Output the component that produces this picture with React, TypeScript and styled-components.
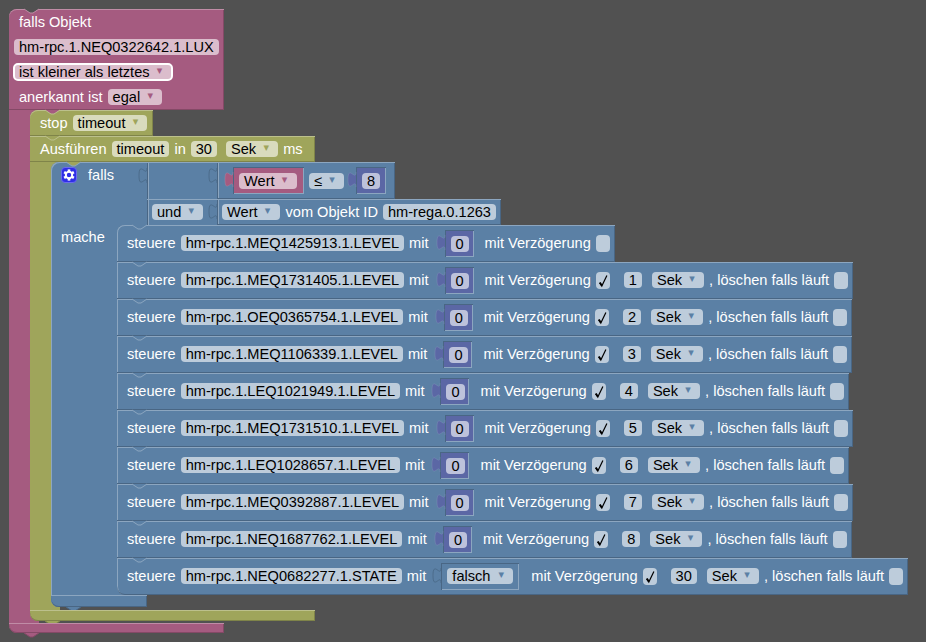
import styled, { createGlobalStyle } from "styled-components";

const hues = {
  pink: { base: "#a55b80", light: "#c08ca6", dark: "#844966", pill: "#dbbdcc" },
  green: { base: "#9fa55b", light: "#bcc08c", dark: "#7f8449", pill: "#d9dbbd" },
  blue: { base: "#5b80a5", light: "#8ca6c0", dark: "#496684", pill: "#bdccdb" },
  purple: { base: "#5b67a5", light: "#8c95c0", dark: "#495284", pill: "#bdc2db" },
};
type Hue = keyof typeof hues;

const GlobalStyle = createGlobalStyle`
  html, body {
    margin: 0;
    height: 100%;
    background-color: #515151;
    overflow: hidden;
  }
  body {
    font-family: "Liberation Sans", Arial, sans-serif;
    font-size: 14.6px;
  }
`;

const Page = styled.div`
  padding: 9px 0 0 9px;
  color: #fff;
  white-space: nowrap;
`;

const Shaded = styled.div<{ $hue: Hue }>`
  position: relative;
  background-color: ${(p) => hues[p.$hue].base};
  box-shadow:
    inset 0 1px ${(p) => hues[p.$hue].light},
    inset 0 -1px ${(p) => hues[p.$hue].dark},
    inset -1px 0 ${(p) => hues[p.$hue].dark};
`;

/* header of the outer trigger block */
const TriggerHead = styled(Shaded)`
  width: 215px;
  height: 101px;
  padding: 0 0 1px 5px;
  box-sizing: border-box;
  border-top-left-radius: 8px;
`;

const HeadRow = styled.div`
  display: flex;
  align-items: center;
  gap: 5px;
  height: 25px;
`;

const HeadLabel = styled.span`
  margin-left: 5px;
`;

const Mouth = styled.div<{ $hue: Hue; $arm: number; $gap: number }>`
  padding-left: ${(p) => p.$arm}px;
  padding-bottom: ${(p) => p.$gap}px;
  background: linear-gradient(
    90deg,
    ${(p) => hues[p.$hue].base} ${(p) => p.$arm + 9}px,
    transparent ${(p) => p.$arm + 9}px
  );
`;

const Foot = styled(Shaded)<{ $w: number; $h: number }>`
  width: ${(p) => p.$w}px;
  height: ${(p) => p.$h}px;
  border-bottom-left-radius: 8px;
`;

const StopBlock = styled(Shaded)`
  width: 123px;
  height: 26px;
  display: flex;
  align-items: center;
  gap: 5px;
  padding-left: 10px;
  box-sizing: border-box;
  border-top-left-radius: 8px;
`;

const TimerHead = styled(Shaded)`
  width: 285px;
  height: 26px;
  display: flex;
  align-items: center;
  gap: 5px;
  padding-left: 10px;
  box-sizing: border-box;
`;

/* the if block: its background is only the left column, the rest overflows */
const IfBlock = styled.div`
  position: relative;
  width: 96px;
  background-color: ${hues.blue.base};
  border-top-left-radius: 8px;
  border-bottom-left-radius: 8px;
  box-shadow: inset 1px 1px ${hues.blue.light};
`;

const IfTop = styled.div`
  display: flex;
  width: max-content;
`;

const IfLabel = styled.div`
  width: 96px;
  height: 63px;
  flex: none;
  display: flex;
  align-items: flex-start;
  gap: 11px;
  padding: 5px 0 0 10px;
  box-sizing: border-box;
`;

const FallsText = styled.span`
  line-height: 16px;
`;

const Conditions = styled.div`
  display: flex;
  flex-direction: column;
  align-items: flex-start;
`;

const CondRow = styled(Shaded)<{ $h: number }>`
  display: flex;
  align-items: center;
  height: ${(p) => p.$h}px;
  box-shadow:
    inset 0 1px ${hues.blue.light},
    inset 1px 0 ${hues.blue.dark},
    inset 2px 0 ${hues.blue.light};
`;

const EmptyCell = styled.div`
  width: 70px;
  flex: none;
`;

const UndCell = styled.div`
  width: 70px;
  flex: none;
  padding-left: 5px;
  box-sizing: border-box;
`;

const InnerCond = styled(Shaded)<{ $h: number; $w: number }>`
  display: flex;
  align-items: center;
  gap: 5px;
  height: ${(p) => p.$h}px;
  width: ${(p) => p.$w}px;
  padding: 0 5px;
  box-sizing: border-box;
  box-shadow:
    inset 0 1px ${hues.blue.light},
    inset 0 -1px ${hues.blue.dark},
    inset -1px 0 ${hues.blue.dark},
    inset 1px 0 ${hues.blue.dark},
    inset 2px 0 ${hues.blue.light};
`;

const MacheRow = styled.div`
  display: flex;
  width: max-content;
`;

const MacheLabel = styled.div`
  width: 66px;
  flex: none;
  padding: 4px 0 0 10px;
  box-sizing: border-box;
`;

const Rows = styled.div`
  display: flex;
  flex-direction: column;
  align-items: flex-start;
`;

const Row = styled(Shaded)<{ $first?: boolean; $last?: boolean }>`
  display: flex;
  align-items: center;
  gap: 5px;
  height: 37px;
  padding: 0 5px 1px 10px;
  box-sizing: border-box;
  border-top-left-radius: ${(p) => (p.$first ? "8px" : "0")};
  border-bottom-left-radius: ${(p) => (p.$last ? "8px" : "0")};
  box-shadow:
    inset 0 1px ${hues.blue.light},
    inset 0 -1px ${hues.blue.dark},
    inset -1px 0 ${hues.blue.dark},
    inset 1px 0 ${hues.blue.light};
`;

const Pill = styled.span<{ $hue: Hue; $selected?: boolean; $ml?: number; $mt?: number; $grow?: boolean }>`
  display: inline-flex;
  align-items: center;
  justify-content: space-between;
  flex: ${(p) => (p.$grow ? "1" : "none")};
  height: 16px;
  padding: 0 5px;
  margin-left: ${(p) => p.$ml ?? 0}px;
  margin-top: ${(p) => p.$mt ?? 0}px;
  border-radius: 4px;
  background-color: ${(p) => hues[p.$hue].pill};
  color: #000;
  line-height: 16px;
  outline: ${(p) => (p.$selected ? "2px solid #fff" : "none")};
  outline-offset: -1px;
`;

const Arrow = styled.span<{ $hue: Hue }>`
  display: inline-block;
  width: 14px;
  margin: -2px 0 0 3px;
  text-align: center;
  color: ${(p) => hues[p.$hue].base};
  font-family: "DejaVu Sans", sans-serif;
  font-size: 11px;
  line-height: 14px;
`;

const Gap = styled.span<{ $w: number }>`
  display: inline-block;
  width: ${(p) => p.$w}px;
  margin-left: -5px;
`;

const CheckBox = styled.span`
  display: inline-flex;
  width: 14px;
  height: 17px;
  border-radius: 4px;
  background-color: ${hues.blue.pill};
`;

const CheckMark = styled.svg`
  width: 14px;
  height: 17px;
`;

const ValueBlock = styled(Shaded)<{ $w: number; $ml?: number }>`
  display: flex;
  align-items: center;
  flex: none;
  width: ${(p) => p.$w}px;
  height: 27px;
  margin-left: ${(p) => p.$ml ?? 8}px;
  padding: 0 6px;
  box-sizing: border-box;
  box-shadow:
    inset 1px 1px ${hues.blue.dark},
    inset -1px -1px ${hues.blue.light},
    inset 0 0 0 1px ${(p) => (p.$hue === "blue" ? hues.blue.light : "transparent")};
`;

const TabShape = styled.svg<{ $top: number }>`
  position: absolute;
  left: -8px;
  top: ${(p) => p.$top}px;
  width: 9px;
  height: 16px;
  overflow: visible;
`;

const NotchShape = styled.svg<{ $bottom?: boolean }>`
  position: absolute;
  left: 15px;
  ${(p) => (p.$bottom ? "bottom: -4px;" : "top: 0;")}
  width: 15px;
  height: 4px;
  overflow: visible;
`;

const GearBox = styled.svg`
  flex: none;
  width: 16px;
  height: 16px;
`;

function Tab({ hue, top, empty }: { hue: Hue; top: number; empty?: boolean }) {
  const c = hues[hue];
  return (
    <TabShape $top={top} viewBox="0 0 9 16">
      <path d="M8 0 c0 10 -8 -8 -8 7.5 s8 -2.5 8 7.5 Z" fill={c.base} />
      <path
        d="M8 0 c0 10 -8 -8 -8 7.5 s8 -2.5 8 7.5"
        fill="none"
        stroke={empty ? c.dark : c.light}
        strokeOpacity={empty ? 0.8 : 0.35}
      />
    </TabShape>
  );
}

function Notch({ fill, line, bottom }: { fill: string; line: string; bottom?: boolean }) {
  return (
    <NotchShape $bottom={bottom} viewBox="0 0 15 4">
      <path d="M0 0 l6 4 h3 l6 -4 Z" fill={fill} />
      <path d="M0 0 l6 4 h3 l6 -4" fill="none" stroke={line} />
    </NotchShape>
  );
}

function Gear() {
  return (
    <GearBox viewBox="0 0 16 16">
      <rect x=".5" y=".5" width="15" height="15" rx="3.5" fill="#2f2fe6" stroke="#6a6af0" />
      <g transform="translate(8 8)" fill="#fff">
        {[0, 60, 120, 180, 240, 300].map((a) => (
          <rect key={a} x="-1.3" y="-5.6" width="2.6" height="3" transform={`rotate(${a})`} />
        ))}
      </g>
      <circle cx="8" cy="8" r="3.2" fill="none" stroke="#fff" strokeWidth="2" />
    </GearBox>
  );
}

function Check() {
  return (
    <CheckMark viewBox="0 0 14 17">
      <path d="M3.6 10.8 L5.8 14 L10.9 3.4" fill="none" stroke="#000" strokeWidth="1.2" />
      <path d="M3.8 10.6 L5.9 13.6" fill="none" stroke="#000" strokeWidth="1.8" />
    </CheckMark>
  );
}

function Dropdown({
  hue,
  text,
  selected,
  ml,
  grow,
}: {
  hue: Hue;
  text: string;
  selected?: boolean;
  ml?: number;
  grow?: boolean;
}) {
  return (
    <Pill $hue={hue} $selected={selected} $ml={ml} $grow={grow}>
      {text}
      <Arrow $hue={hue}>▾</Arrow>
    </Pill>
  );
}

type RowData = { id: string; value: string; delay?: string };

const rowData: RowData[] = [
  { id: "hm-rpc.1.MEQ1425913.1.LEVEL", value: "0" },
  { id: "hm-rpc.1.MEQ1731405.1.LEVEL", value: "0", delay: "1" },
  { id: "hm-rpc.1.OEQ0365754.1.LEVEL", value: "0", delay: "2" },
  { id: "hm-rpc.1.MEQ1106339.1.LEVEL", value: "0", delay: "3" },
  { id: "hm-rpc.1.LEQ1021949.1.LEVEL", value: "0", delay: "4" },
  { id: "hm-rpc.1.MEQ1731510.1.LEVEL", value: "0", delay: "5" },
  { id: "hm-rpc.1.LEQ1028657.1.LEVEL", value: "0", delay: "6" },
  { id: "hm-rpc.1.MEQ0392887.1.LEVEL", value: "0", delay: "7" },
  { id: "hm-rpc.1.NEQ1687762.1.LEVEL", value: "0", delay: "8" },
  { id: "hm-rpc.1.NEQ0682277.1.STATE", value: "falsch", delay: "30" },
];

function ControlRow({ row, first, last }: { row: RowData; first: boolean; last: boolean }) {
  const isBool = row.value === "falsch";
  return (
    <Row $hue="blue" $first={first} $last={last}>
      <Notch fill={hues.blue.base} line={hues.blue.light} />
      <span>steuere</span>
      <Pill $hue="blue">{row.id}</Pill>
      <span>mit</span>
      {isBool ? (
        <ValueBlock $hue="blue" $w={78} $ml={10}>
          <Tab hue="blue" top={5} empty />
          <Dropdown hue="blue" text="falsch" grow />
        </ValueBlock>
      ) : (
        <ValueBlock $hue="purple" $w={29} $ml={11}>
          <Tab hue="purple" top={5} />
          <Pill $hue="purple" $mt={1}>
            {row.value}
          </Pill>
        </ValueBlock>
      )}
      <Gap $w={isBool ? 7 : 6} />
      <span>mit Verzögerung</span>
      <CheckBox>{row.delay && <Check />}</CheckBox>
      {row.delay && (
        <>
          <Pill $hue="blue" $ml={9}>
            {row.delay}
          </Pill>
          <Dropdown hue="blue" text="Sek" ml={5} />
          <span>, löschen falls läuft</span>
          <CheckBox />
        </>
      )}
      {last && <Notch fill={hues.blue.base} line={hues.blue.dark} bottom />}
    </Row>
  );
}

export default function App() {
  return (
    <>
      <GlobalStyle />
      <Page>
        <TriggerHead $hue="pink">
          <Notch fill="#515151" line={hues.pink.light} />
          <HeadRow>
            <HeadLabel>falls Objekt</HeadLabel>
          </HeadRow>
          <HeadRow>
            <Pill $hue="pink">hm-rpc.1.NEQ0322642.1.LUX</Pill>
          </HeadRow>
          <HeadRow>
            <Dropdown hue="pink" text="ist kleiner als letztes" selected />
          </HeadRow>
          <HeadRow>
            <HeadLabel>anerkannt ist</HeadLabel>
            <Dropdown hue="pink" text="egal" />
          </HeadRow>
        </TriggerHead>
        <Mouth $hue="pink" $arm={21} $gap={2}>
          <StopBlock $hue="green">
            <Notch fill={hues.pink.base} line={hues.green.light} />
            <span>stop</span>
            <Dropdown hue="green" text="timeout" />
          </StopBlock>
          <TimerHead $hue="green">
            <Notch fill={hues.green.base} line={hues.green.light} />
            <span>Ausführen</span>
            <Pill $hue="green">timeout</Pill>
            <span>in</span>
            <Pill $hue="green">30</Pill>
            <Dropdown hue="green" text="Sek" ml={4} />
            <span>ms</span>
          </TimerHead>
          <Mouth $hue="green" $arm={21} $gap={3}>
            <IfBlock>
              <Notch fill={hues.green.base} line={hues.blue.light} />
              <IfTop>
                <IfLabel>
                  <Gear />
                  <FallsText>falls</FallsText>
                </IfLabel>
                <Conditions>
                  <CondRow $hue="blue" $h={37}>
                    <Tab hue="blue" top={6} empty />
                    <EmptyCell />
                    <InnerCond $hue="blue" $h={37} $w={178}>
                      <Tab hue="blue" top={6} empty />
                      <ValueBlock $hue="pink" $w={71} $ml={11}>
                        <Tab hue="pink" top={5} />
                        <Dropdown hue="pink" text="Wert" />
                      </ValueBlock>
                      <Dropdown hue="blue" text="≤" />
                      <ValueBlock $hue="purple" $w={30} $ml={7}>
                        <Tab hue="purple" top={5} />
                        <Pill $hue="purple" $mt={1}>
                          8
                        </Pill>
                      </ValueBlock>
                    </InnerCond>
                  </CondRow>
                  <CondRow $hue="blue" $h={26}>
                    <UndCell>
                      <Dropdown hue="blue" text="und" />
                    </UndCell>
                    <InnerCond $hue="blue" $h={26} $w={284}>
                      <Tab hue="blue" top={5} empty />
                      <Dropdown hue="blue" text="Wert" />
                      <Gap $w={1} />
                      <span>vom Objekt ID</span>
                      <Pill $hue="blue">hm-rega.0.1263</Pill>
                    </InnerCond>
                  </CondRow>
                </Conditions>
              </IfTop>
              <MacheRow>
                <MacheLabel>mache</MacheLabel>
                <Rows>
                  {rowData.map((row, i) => (
                    <ControlRow key={row.id} row={row} first={i === 0} last={i === rowData.length - 1} />
                  ))}
                </Rows>
              </MacheRow>
              <Foot $hue="blue" $w={96} $h={12}>
                <Notch fill={hues.blue.base} line={hues.blue.dark} bottom />
              </Foot>
            </IfBlock>
          </Mouth>
          <Foot $hue="green" $w={285} $h={11}>
            <Notch fill={hues.green.base} line={hues.green.dark} bottom />
          </Foot>
        </Mouth>
        <Foot $hue="pink" $w={215} $h={10}>
          <Notch fill={hues.pink.base} line={hues.pink.dark} bottom />
        </Foot>
      </Page>
    </>
  );
}
